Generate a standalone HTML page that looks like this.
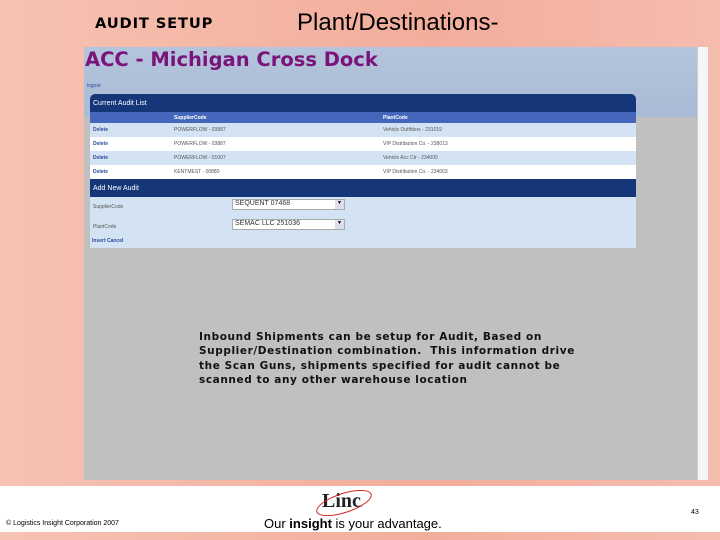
<!DOCTYPE html>
<html><head><style>
*{margin:0;padding:0;box-sizing:border-box}
body{width:720px;height:540px;overflow:hidden;position:relative;font-family:"Liberation Sans",sans-serif;background:linear-gradient(90deg,#f6c2b2,#f3ad9c 60%,#f5bcae)}
.a{position:absolute}
.row{position:absolute;left:0;width:546px;height:14px;font-size:5px;color:#555}
.row span{position:absolute;top:4px}
</style></head><body>
<div class="a" style="left:95px;top:16px;font-size:14px;font-weight:bold;font-family:'DejaVu Sans',sans-serif;letter-spacing:0.8px;transform:scaleX(1.05);transform-origin:left">AUDIT SETUP</div>
<div class="a" style="left:297px;top:9px;font-size:24px">Plant/Destinations-</div>
<div class="a" style="left:84px;top:47px;width:613px;height:433px;background:#c0c0c0"></div>
<div class="a" style="left:84px;top:47px;width:613px;height:70px;background:linear-gradient(#b4c4dc,#a9bbd5)"></div>
<div class="a" style="left:697px;top:47px;width:11px;height:433px;background:#f4f6fa;border-left:1px solid #ccc"></div>
<div class="a" style="left:85px;top:48px;font-size:19.5px;font-weight:bold;color:#7a147a;font-family:'DejaVu Sans',sans-serif">ACC - Michigan Cross Dock</div>
<div class="a" style="left:87px;top:83px;font-size:5px;color:#2a4a9a">logout</div>
<div class="a" style="left:90px;top:94px;width:546px;height:154px;background:#d4e3f3;border-radius:5px 5px 0 0;overflow:hidden">
 <div class="a" style="left:0;top:0;width:546px;height:18px;background:#15377a;color:#fff;font-size:7px;padding:6px 0 0 3px">Current Audit List</div>
 <div class="row" style="top:18px;height:11px;background:#4466bb;color:#fff;font-weight:bold"><span style="left:84px;top:3px">SupplierCode</span><span style="left:293px;top:3px">PlantCode</span></div>
 <div class="row" style="top:29px;background:#d4e3f3"><span style="left:3px;color:#2a4a9a;font-weight:bold">Delete</span><span style="left:84px">POWERFLOW - 03887</span><span style="left:293px">Vehicle Outfitters - 231019</span></div>
 <div class="row" style="top:43px;background:#fff"><span style="left:3px;color:#2a4a9a;font-weight:bold">Delete</span><span style="left:84px">POWERFLOW - 03887</span><span style="left:293px">VIP Distribution Co. - 238013</span></div>
 <div class="row" style="top:57px;background:#d4e3f3"><span style="left:3px;color:#2a4a9a;font-weight:bold">Delete</span><span style="left:84px">POWERFLOW - 01007</span><span style="left:293px">Vehicle Acc Ctr - 234000</span></div>
 <div class="row" style="top:71px;background:#fff"><span style="left:3px;color:#2a4a9a;font-weight:bold">Delete</span><span style="left:84px">KENTMEST - 00880</span><span style="left:293px">VIP Distribution Co. - 234003</span></div>
 <div class="a" style="left:0;top:85px;width:546px;height:18px;background:#15377a;color:#fff;font-size:7px;padding:6px 0 0 3px">Add New Audit</div>
 <div class="a" style="left:3px;top:110px;font-size:5px;color:#555">SupplierCode</div>
 <div class="a" style="left:3px;top:130px;font-size:5px;color:#555">PlantCode</div>
 <div class="a" style="left:142px;top:105px;width:113px;height:11px;background:#fff;border:1px solid #aaa;font-size:7px;padding-left:2px;color:#333">SEQUENT 07468</div>
 <div class="a" style="left:245px;top:106px;width:9px;height:9px;background:#dde;font-size:5px;text-align:center">▼</div>
 <div class="a" style="left:142px;top:125px;width:113px;height:11px;background:#fff;border:1px solid #aaa;font-size:7px;padding-left:2px;color:#333">SEMAC LLC 251036</div>
 <div class="a" style="left:245px;top:126px;width:9px;height:9px;background:#dde;font-size:5px;text-align:center">▼</div>
 <div class="a" style="left:2px;top:144px;font-size:5px;color:#2a4a9a;font-weight:bold">Insert Cancel</div>
</div>
<div class="a" style="left:199px;top:330px;font-size:10.5px;font-weight:bold;line-height:14.3px;letter-spacing:0.6px;color:#111;font-family:'DejaVu Sans',sans-serif;white-space:nowrap">Inbound Shipments can be setup for Audit, Based on<br>Supplier/Destination combination.&nbsp; This information drive<br>the Scan Guns, shipments specified for audit cannot be<br>scanned to any other warehouse location</div>
<div class="a" style="left:0;top:486px;width:720px;height:46px;background:#fff"></div>
<div class="a" style="left:6px;top:520px;font-size:7px">© Logistics Insight Corporation 2007</div>
<div class="a" style="left:322px;top:490px;font-size:20px;font-family:'Liberation Serif',serif;font-weight:bold;color:#222">Linc<span style="font-size:5px">.</span></div>
<div class="a" style="left:315px;top:493px;width:58px;height:20px;border:1.5px solid #c22;border-radius:50%;transform:rotate(-18deg)"></div>
<div class="a" style="left:264px;top:516px;font-size:13px">Our <b>insight</b> is your advantage.</div>
<div class="a" style="left:691px;top:509px;font-size:7px">43</div>
</body></html>
